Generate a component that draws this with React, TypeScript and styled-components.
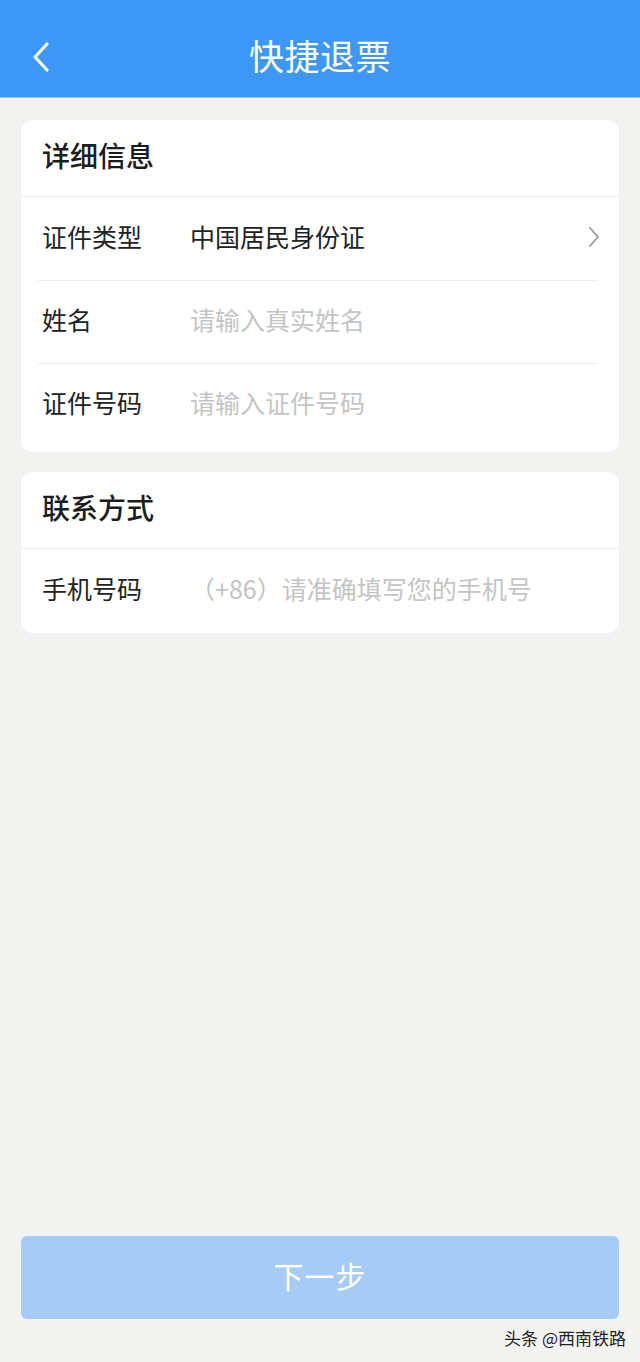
import styled, { createGlobalStyle } from "styled-components";

const GlobalStyle = createGlobalStyle`
  html, body {
    margin: 0;
    padding: 0;
    background: #f2f2f0;
  }
  body {
    font-family: "Noto Sans CJK SC", "Noto Sans", sans-serif;
  }
`;

type Row = {
  label: string;
  value?: string;
  placeholder?: string;
  arrow?: boolean;
};

const sections: { title: string; rows: Row[]; pad: number }[] = [
  {
    title: "详细信息",
    pad: 6,
    rows: [
      { label: "证件类型", value: "中国居民身份证", arrow: true },
      { label: "姓名", placeholder: "请输入真实姓名" },
      { label: "证件号码", placeholder: "请输入证件号码" },
    ],
  },
  {
    title: "联系方式",
    pad: 1,
    rows: [{ label: "手机号码", placeholder: "（+86）请准确填写您的手机号" }],
  },
];

function App() {
  return (
    <Page>
      <GlobalStyle />
      <Header>
        <BackButton aria-label="返回">
          <svg width="22" height="32" viewBox="0 0 22 32" fill="none">
            <path
              d="M17 3 L5 16 L17 29"
              stroke="#fff"
              strokeWidth="3.2"
              strokeLinecap="round"
              strokeLinejoin="round"
            />
          </svg>
        </BackButton>
        <Title>快捷退票</Title>
      </Header>

      <Content>
        {sections.map((section) => (
          <Card key={section.title} $pad={section.pad}>
            <CardTitle>{section.title}</CardTitle>
            {section.rows.map((row, i) => (
              <FieldRow key={row.label} $divider={i > 0}>
                <Label>{row.label}</Label>
                {row.value ? (
                  <Value>{row.value}</Value>
                ) : (
                  <Input placeholder={row.placeholder} />
                )}
                {row.arrow && (
                  <Arrow width="12" height="22" viewBox="0 0 12 22" fill="none">
                    <path
                      d="M2 2 L10 11 L2 20"
                      stroke="#9a9a9a"
                      strokeWidth="1.8"
                      strokeLinecap="round"
                      strokeLinejoin="round"
                    />
                  </Arrow>
                )}
              </FieldRow>
            ))}
          </Card>
        ))}
      </Content>

      <Footer>
        <NextButton disabled>下一步</NextButton>
      </Footer>
      <Watermark>头条 @西南铁路</Watermark>
    </Page>
  );
}

const Page = styled.div`
  position: relative;
  min-height: 1362px;
  display: flex;
  flex-direction: column;
  background: #f2f2f0;
`;

const Header = styled.header`
  height: 98px;
  background: #3d97f6;
  border-bottom: 1px solid #8fc6f8;
  box-sizing: border-box;
  display: flex;
  align-items: center;
  justify-content: center;
  position: relative;
`;

const BackButton = styled.button`
  position: absolute;
  left: 25px;
  top: 40px;
  width: 32px;
  height: 34px;
  padding: 0;
  border: none;
  background: none;
  display: flex;
  align-items: center;
  justify-content: center;
`;

const Title = styled.h1`
  margin: 12px 0 0;
  color: #fff;
  font-size: 35px;
  font-weight: 400;
  letter-spacing: 0.5px;
`;

const Content = styled.main`
  padding: 22px 21px 0;
  display: flex;
  flex-direction: column;
  gap: 20px;
`;

const Card = styled.section<{ $pad: number }>`
  background: #fff;
  border-radius: 12px;
  padding-bottom: ${(p) => p.$pad}px;
`;

const CardTitle = styled.h2`
  margin: 0;
  height: 77px;
  padding: 0 21px 6px;
  display: flex;
  align-items: center;
  font-size: 28px;
  font-weight: 500;
  color: #1c1c1c;
  border-bottom: 1px solid #ececec;
  box-sizing: border-box;
`;

const FieldRow = styled.div<{ $divider: boolean }>`
  height: 83px;
  margin: 0 21px 0 17px;
  padding: 0 0 6px 4px;
  display: flex;
  align-items: center;
  box-sizing: border-box;
  border-top: ${(p) => (p.$divider ? "1px solid #ececec" : "none")};
`;

const Label = styled.span`
  width: 148px;
  flex-shrink: 0;
  font-size: 25px;
  color: #222;
`;

const Value = styled.span`
  flex: 1;
  font-size: 25px;
  color: #222;
`;

const Input = styled.input`
  flex: 1;
  min-width: 0;
  border: none;
  outline: none;
  padding: 0;
  background: transparent;
  font-family: inherit;
  font-size: 25px;
  color: #222;

  &::placeholder {
    color: #c4c4c4;
  }
`;

const Arrow = styled.svg`
  margin-right: -2px;
  margin-top: 2px;
`;

const Footer = styled.footer`
  margin-top: auto;
  padding: 0 21px 43px;
`;

const NextButton = styled.button`
  width: 100%;
  height: 83px;
  border: none;
  border-radius: 6px;
  background: #a6cbf5;
  color: #fff;
  font-family: inherit;
  font-size: 30px;
  letter-spacing: 1px;
  padding-bottom: 6px;
`;

const Watermark = styled.div`
  position: absolute;
  right: 14px;
  bottom: 12px;
  font-size: 17px;
  color: #222;
  text-shadow: 0 0 2px #fff;
`;

export default App;
